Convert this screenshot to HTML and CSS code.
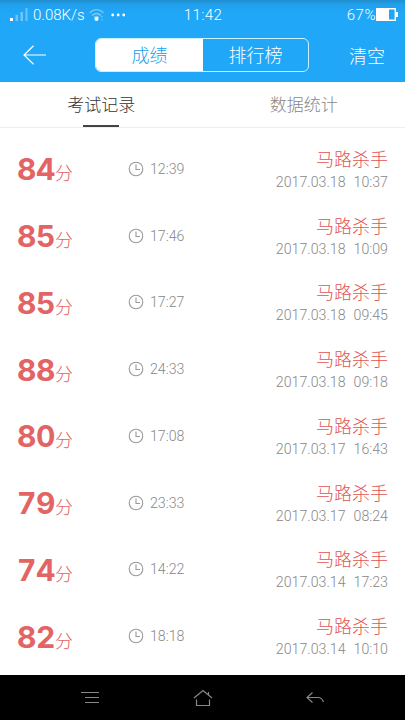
FILE: index.html
```
<!DOCTYPE html>
<html lang="zh-CN">
<head>
  <meta charset="utf-8">
  <title>考试记录</title>
  <link rel="stylesheet" href="styles.css">
</head>
<body>
  <header>
    <div class="status">
      <div class="network">
        <svg class="signal" width="18" height="14" viewBox="0 0 18 14"><path fill="#fff" d="M0 10h3v3H0z"/><path fill="#fff" opacity=".35" d="M5.500 7h2.500v6H5.500zM10.500 4h2.500v9h-2.500zM15.500 0h2v13h-2z"/></svg>
        <span class="speed">0.08K/s</span>
        <svg class="wifi" width="16" height="14" viewBox="0 0 16 14"><g fill="none" stroke="#fff" stroke-width="1.300" opacity=".4"><path d="M.7 4.800Q7.500-1.500 14.500 4.800M3 7.500q4.500-4 9 0M5 9.800q2.500-2.500 5 0M13 8v1.500M13 11v1.500"/></g><circle cx="7.500" cy="11" r="2" fill="#fff"/></svg>
        <svg class="dots" width="15" height="4" viewBox="0 0 15 4"><g fill="#fff"><circle cx="1.700" cy="2" r="1.400"/><circle cx="7.200" cy="2" r="1.400"/><circle cx="12.700" cy="2" r="1.400"/></g></svg>
      </div>
      <span class="clock">11:42</span>
      <div class="power">
        <span>67%</span>
        <svg width="22" height="13" viewBox="0 0 22 13"><path fill="none" stroke="#fff" stroke-width="1.400" d="M.7.700h18.600v11.600H.7z"/><path fill="#fff" d="M1 1h12v11H1zM20 4h2v5h-2z"/></svg>
      </div>
    </div>
    <nav>
      <a class="back"><svg width="24" height="20" viewBox="0 0 24 20"><path fill="none" stroke="#fff" stroke-width="1.200" d="M23 10H1M10.500.7L1 10l9.500 9.300"/></svg></a>
      <div class="switch"><a class="on">成绩</a><a>排行榜</a></div>
      <a class="clear">清空</a>
    </nav>
  </header>

  <div class="tabs">
    <a class="current"><span>考试记录</span></a>
    <a><span>数据统计</span></a>
  </div>

  <svg width="0" height="0" class="defs"><symbol id="timer" viewBox="0 0 16 16"><g fill="none" stroke="#999" stroke-width="1.100"><circle cx="8" cy="8" r="6.800"/><path d="M8 3.500v5h4"/></g></symbol></svg>

  <ul>
    <li><div class="score"><b>84</b>分</div><div class="used"><svg><use href="#timer"/></svg>12:39</div><div class="who"><strong>马路杀手</strong><time><span>2017.03.18</span><span>10:37</span></time></div></li>
    <li><div class="score"><b>85</b>分</div><div class="used"><svg><use href="#timer"/></svg>17:46</div><div class="who"><strong>马路杀手</strong><time><span>2017.03.18</span><span>10:09</span></time></div></li>
    <li><div class="score"><b>85</b>分</div><div class="used"><svg><use href="#timer"/></svg>17:27</div><div class="who"><strong>马路杀手</strong><time><span>2017.03.18</span><span>09:45</span></time></div></li>
    <li><div class="score"><b>88</b>分</div><div class="used"><svg><use href="#timer"/></svg>24:33</div><div class="who"><strong>马路杀手</strong><time><span>2017.03.18</span><span>09:18</span></time></div></li>
    <li><div class="score"><b>80</b>分</div><div class="used"><svg><use href="#timer"/></svg>17:08</div><div class="who"><strong>马路杀手</strong><time><span>2017.03.17</span><span>16:43</span></time></div></li>
    <li><div class="score"><b>79</b>分</div><div class="used"><svg><use href="#timer"/></svg>23:33</div><div class="who"><strong>马路杀手</strong><time><span>2017.03.17</span><span>08:24</span></time></div></li>
    <li><div class="score"><b>74</b>分</div><div class="used"><svg><use href="#timer"/></svg>14:22</div><div class="who"><strong>马路杀手</strong><time><span>2017.03.14</span><span>17:23</span></time></div></li>
    <li><div class="score"><b>82</b>分</div><div class="used"><svg><use href="#timer"/></svg>18:18</div><div class="who"><strong>马路杀手</strong><time><span>2017.03.14</span><span>10:10</span></time></div></li>
  </ul>

  <footer>
    <svg width="18" height="14" viewBox="0 0 18 14"><path fill="none" stroke="#888" stroke-width="1.200" d="M0 1.500h18M4 6.500h14M4 11.500h14"/></svg>
    <svg width="20" height="18" viewBox="0 0 20 18"><path fill="none" stroke="#888" stroke-width="1.200" d="M1 9l9-7.500L19 9M15.500 6V3M3.500 10.500v6h13v-6"/></svg>
    <svg width="18" height="14" viewBox="0 0 18 14"><path fill="none" stroke="#888" stroke-width="1.200" d="M6.500 1.500L1 6.500l5.500 5M1 6.500h11q4 0 5.500 4.500"/></svg>
  </footer>
</body>
</html>
```
FILE: styles.css
```
* { box-sizing: border-box; }
body { margin: 0; height: 720px; display: flex; flex-direction: column; overflow: hidden; background: #fff; color: #888; font-family: Inter, "Noto Sans CJK SC", sans-serif; font-weight: 300; }
svg { display: block; flex: none; }
.defs { height: 0; }

header { height: 82px; color: #fff; background: linear-gradient(#218fce, #21a1ef 5px, #20a7f7 14px); }
.status { height: 28px; display: grid; grid-template-columns: 1fr auto 1fr; align-items: center; padding: 1px 7px 0 10px; font-family: Roboto, sans-serif; font-size: 15px; }
.network, .power { display: flex; align-items: center; }
.power { justify-content: flex-end; }
.power span { letter-spacing: .5px; }
.speed { margin: 0 4px 0 5px; white-space: nowrap; }
.dots { margin-left: 6px; }
.clock { letter-spacing: .4px; margin-left: -2px; }

nav { height: 54px; display: flex; align-items: center; padding: 0 20px 0 23px; }
.switch { width: 214px; height: 34px; margin-left: 48px; display: flex; border: 1px solid #c9f1ff; border-radius: 6px; overflow: hidden; }
.switch a { flex: 1; line-height: 34px; text-align: center; font-size: 18px; }
.switch .on { flex: 0 0 107px; background: #fff; color: #20a0e8; }
.clear { margin-left: auto; font-size: 18px; }

.tabs { height: 46px; display: flex; border-bottom: 1px solid #eee; font-size: 17px; }
.tabs a { flex: 1; display: flex; flex-direction: column; align-items: center; line-height: 47px; }
.tabs .current { color: #333; }
.tabs .current:after { content: ""; width: 36px; height: 2px; margin-top: -4px; background: #444; }

ul { flex: 1; margin: 0; padding: 8px 17px 0; list-style: none; }
li { height: 66.75px; display: grid; grid-template-columns: 111px 1fr auto; align-items: center; }
.score { display: flex; align-items: baseline; color: #e26464; font-size: 18px; }
.score b { width: 38px; font-size: 30px; font-weight: 700; line-height: 36px; font-variant-numeric: tabular-nums; letter-spacing: -.3px; }
.used, time { font-family: Roboto, sans-serif; font-size: 14.2px; }
.used { display: flex; align-items: center; gap: 6px; margin-top: -1px; }
.used svg { width: 16px; height: 16px; }
.who { display: flex; flex-direction: column; align-items: flex-end; padding-top: 1px; }
.who strong { font-size: 18px; line-height: 24px; font-weight: 300; color: #e05555; }
time { display: flex; gap: 8px; line-height: 20px; }

footer { height: 45px; background: #000; display: flex; align-items: center; justify-content: space-between; padding: 0 81px; }
```
